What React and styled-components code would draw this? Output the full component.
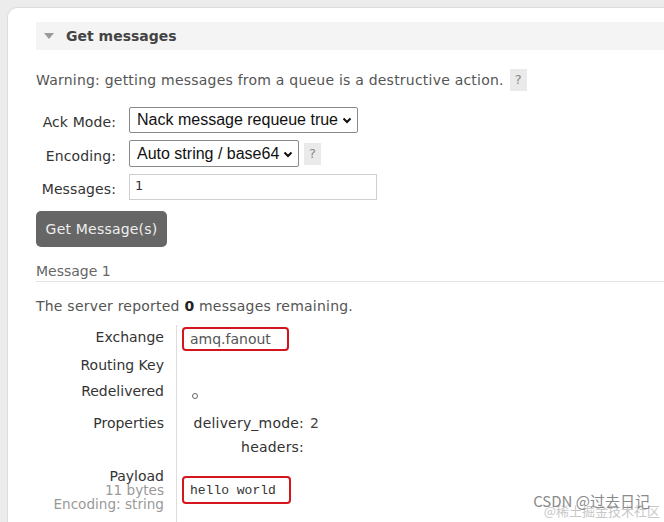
import React from "react";
import styled, { createGlobalStyle } from "styled-components";

const Global = createGlobalStyle`
  html, body { margin: 0; padding: 0; background: #ececec; overflow: hidden; }
  body { font-family: "DejaVu Sans", Verdana, sans-serif; }
  #root { width: 664px; height: 522px; }
`;

const Page = styled.div`
  position: relative;
  width: 664px;
  height: 522px;
  padding: 7px 0 0 7px;
  box-sizing: border-box;
  overflow: hidden;
`;

const Panel = styled.div`
  background: #fff;
  border: 1px solid #dcdcdc;
  border-right: none;
  border-bottom: none;
  border-radius: 10px 0 0 0;
  height: 100%;
  box-sizing: border-box;
  padding: 14px 0 0 28px;
  color: #444;
  font-size: 14px;
`;

const Header = styled.div`
  height: 28px;
  background: #f4f4f4;
  display: flex;
  align-items: center;
  gap: 12px;
  padding-left: 8px;
  font-weight: bold;
  font-size: 14px;
  color: #444;
`;

const Triangle = styled.span`
  width: 0;
  height: 0;
  border-left: 5px solid transparent;
  border-right: 5px solid transparent;
  border-top: 6px solid #9a9a9a;
`;

const Warning = styled.p`
  margin: 19px 0 0;
  line-height: 22px;
  color: #555;
  letter-spacing: 0.22px;
  display: flex;
  align-items: center;
`;

const Help = styled.span`
  display: inline-flex;
  align-items: center;
  justify-content: center;
  width: 17px;
  height: 22px;
  background: #eaeaea;
  color: #888;
  font-size: 13px;
  letter-spacing: 0;
  margin-left: ${(p) => p.$gap || 6}px;
`;

const Form = styled.div`
  margin-top: 16px;
  display: grid;
  grid-template-columns: 80px auto;
  column-gap: 13px;
  row-gap: 7px;
  align-items: center;
  justify-content: start;
`;

const Label = styled.label`
  text-align: right;
  color: #333;
  padding-top: 4px;
  letter-spacing: 0.1px;
`;

const Field = styled.div`
  display: flex;
  align-items: center;
`;

const SelectBox = styled.div`
  position: relative;
  width: ${(p) => p.$w}px;
  height: ${(p) => p.$h}px;
  box-sizing: border-box;
  border: 1px solid #8a8a8a;
  border-radius: 2px;
  display: flex;
  align-items: center;
  padding-left: 7px;
  font-family: "Liberation Sans", Arial, sans-serif;
  font-size: 16px;
  color: #111;
  background: #fff;
`;

const Chevron = styled.svg`
  position: absolute;
  right: 5px;
  top: 50%;
  margin-top: -3px;
`;

const Input = styled.div`
  width: 248px;
  height: 26px;
  box-sizing: border-box;
  border: 1px solid #cfcfcf;
  padding: 3px 5px;
  font-size: 13px;
  color: #333;
`;

const Button = styled.button`
  margin-top: 11px;
  width: 131px;
  height: 36px;
  border: none;
  border-radius: 5px;
  background: #666;
  color: #eee;
  font-family: "DejaVu Sans", Verdana, sans-serif;
  font-size: 14px;
  letter-spacing: 0.2px;
  padding: 0;
`;

const SubHeading = styled.div`
  margin-top: 14px;
  line-height: 20px;
  color: #666;
  border-bottom: 1px solid #e4e4e4;
`;

const Remaining = styled.p`
  margin: 14px 0 0;
  line-height: 20px;
  color: #555;
  letter-spacing: 0.22px;
  b { color: #222; }
`;

const Table = styled.div`
  margin-top: 9px;
  display: grid;
  grid-template-columns: 141px 1fr;
`;

const Th = styled.div`
  box-sizing: border-box;
  height: ${(p) => p.$h}px;
  padding: ${(p) => p.$pt}px 12px 0 0;
  border-right: 1px solid #dedede;
  text-align: right;
  line-height: 20px;
  color: #333;
`;

const Td = styled.div`
  padding: ${(p) => p.$pt || 0}px 0 0 5px;
  color: #555;
`;

const Boxed = styled.div`
  display: inline-flex;
  align-items: center;
  box-sizing: border-box;
  width: ${(p) => p.$w}px;
  height: ${(p) => p.$h}px;
  border: 2px solid #d3161e;
  border-radius: 4px;
  padding-left: 6px;
  font-family: ${(p) => (p.$mono ? '"Liberation Mono", "Courier New", monospace' : "inherit")};
  font-size: ${(p) => (p.$mono ? 13 : 14)}px;
  color: ${(p) => (p.$mono ? "#333" : "#555")};
`;

const Circle = styled.span`
  display: inline-block;
  margin: 15px 0 0 10px;
  width: 4px;
  height: 4px;
  border: 1px solid #666;
  border-radius: 50%;
`;

const Props = styled.div`
  display: grid;
  grid-template-columns: 120px auto;
  column-gap: 6px;
  row-gap: 4px;
  line-height: 20px;
  letter-spacing: 0.2px;
  justify-content: start;
  margin-left: 2px;
`;

const PropKey = styled.span`
  text-align: right;
  color: #333;
`;

const PropVal = styled.span`
  color: #444;
`;

const PayloadTh = styled(Th)`
  line-height: 14px;
  span { display: block; color: #999; font-size: 13.6px; }
  strong { font-weight: normal; color: #333; display: block; }
`;

const Watermark = styled.div`
  position: absolute;
  right: 14px;
  bottom: 11px;
  font-family: "Noto Sans CJK SC", sans-serif;
  font-size: 15px;
  color: #8a8a8a;
  white-space: nowrap;
`;

const WatermarkFaint = styled.div`
  position: absolute;
  right: 4px;
  bottom: 2px;
  font-family: "Noto Sans CJK SC", sans-serif;
  font-size: 13px;
  color: #c8c8c8;
  white-space: nowrap;
`;

const Caret = () => (
  <Chevron width="10" height="7" viewBox="0 0 10 7">
    <path d="M1.5 1.5 L5 5 L8.5 1.5" fill="none" stroke="#111" strokeWidth="2" />
  </Chevron>
);

export default function App() {
  return (
    <>
      <Global />
      <Page>
        <Panel>
          <Header>
            <Triangle />
            Get messages
          </Header>
          <Warning>
            Warning: getting messages from a queue is a destructive action.
            <Help>?</Help>
          </Warning>
          <Form>
            <Label>Ack Mode:</Label>
            <Field>
              <SelectBox $w={229} $h={26}>
                Nack message requeue true
                <Caret />
              </SelectBox>
            </Field>
            <Label>Encoding:</Label>
            <Field>
              <SelectBox $w={170} $h={27}>
                Auto string / base64
                <Caret />
              </SelectBox>
              <Help $gap={5}>?</Help>
            </Field>
            <Label>Messages:</Label>
            <Field>
              <Input>1</Input>
            </Field>
          </Form>
          <Button>Get Message(s)</Button>
          <SubHeading>Message 1</SubHeading>
          <Remaining>
            The server reported <b>0</b> messages remaining.
          </Remaining>
          <Table>
            <Th $h={28} $pt={2}>Exchange</Th>
            <Td $pt={2}>
              <Boxed $w={107} $h={24}>amq.fanout</Boxed>
            </Td>
            <Th $h={25} $pt={2}>Routing Key</Th>
            <Td />
            <Th $h={30} $pt={3}>Redelivered</Th>
            <Td>
              <Circle />
            </Td>
            <Th $h={54} $pt={5}>Properties</Th>
            <Td $pt={5}>
              <Props>
                <PropKey>delivery_mode:</PropKey>
                <PropVal>2</PropVal>
                <PropKey>headers:</PropKey>
                <PropVal />
              </Props>
            </Td>
            <PayloadTh $h={70} $pt={7}>
              <strong>Payload</strong>
              <span>11 bytes</span>
              <span>Encoding: string</span>
            </PayloadTh>
            <Td $pt={14}>
              <Boxed $w={109} $h={28} $mono>hello world</Boxed>
            </Td>
          </Table>
        </Panel>
        <WatermarkFaint>@稀土掘金技术社区</WatermarkFaint>
        <Watermark>CSDN @过去日记</Watermark>
      </Page>
    </>
  );
}
